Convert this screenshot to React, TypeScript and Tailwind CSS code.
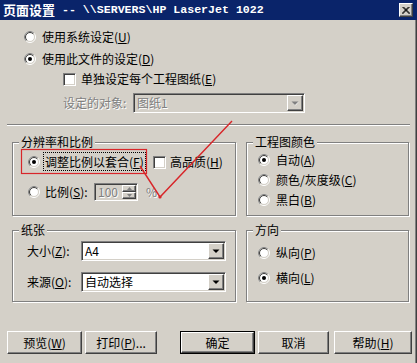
import React from 'react';

const sunken =
  'border border-t-[#808080] border-l-[#808080] border-b-white border-r-white shadow-[inset_1px_1px_0_#404040,inset_-1px_-1px_0_#d4d0c8]';
const raised =
  'border border-t-white border-l-white border-b-[#404040] border-r-[#404040] shadow-[inset_-1px_-1px_0_#808080,inset_1px_1px_0_#d4d0c8]';
const etched = 'border border-[#808080] shadow-[inset_1px_1px_0_#fff,1px_1px_0_#fff]';
const disabled = 'text-[#808080] [text-shadow:1px_1px_0_#fff]';

function Radio({ checked = false }: { checked?: boolean }) {
  return (
    <svg width="12" height="12" viewBox="0 0 12 12" className="shrink-0">
      <circle cx="6" cy="6" r="5.5" fill="none" stroke="#fff" />
      <path d="M2.1 9.9 A5.5 5.5 0 0 1 9.9 2.1" fill="none" stroke="#808080" />
      <circle cx="6" cy="6" r="4.5" fill="#fff" stroke="#d4d0c8" />
      <path d="M2.8 9.2 A4.5 4.5 0 0 1 9.2 2.8" fill="none" stroke="#404040" />
      {checked && <circle cx="6" cy="6" r="2" fill="#000" />}
    </svg>
  );
}

function Checkbox() {
  return <div className={`w-[13px] h-[13px] shrink-0 bg-white ${sunken}`} />;
}

function Arrow({ gray = false }: { gray?: boolean }) {
  return (
    <svg width="8" height="5" viewBox="0 0 8 5">
      {gray && <path d="M1.5 1 L7.5 1 L4.5 4.5 Z" fill="#fff" />}
      <path d="M0.5 0.5 L7.5 0.5 L4 4 Z" fill={gray ? '#808080' : '#000'} />
    </svg>
  );
}

function Combo({ value, width, off = false }: { value: string; width: string; off?: boolean }) {
  return (
    <div className={`flex h-[20px] items-center ${width} ${sunken} ${off ? 'bg-[#d4d0c8]' : 'bg-white'}`}>
      <span className={`flex-1 pl-[3px] ${off ? disabled : ''}`}>{value}</span>
      <div className={`mr-[1px] flex h-[16px] w-[16px] items-center justify-center bg-[#d4d0c8] ${raised}`}>
        <Arrow gray={off} />
      </div>
    </div>
  );
}

function Group({ title, className, children }: { title: string; className: string; children: React.ReactNode }) {
  return (
    <div className={`relative ${etched} ${className}`}>
      <span className="absolute -top-[9px] left-[6px] bg-[#d4d0c8] px-[2px] leading-[16px]">{title}</span>
      {children}
    </div>
  );
}

function Btn({ label, width, def = false }: { label: React.ReactNode; width: string; def?: boolean }) {
  return (
    <div className={`h-[23px] ${width} ${def ? 'border border-black' : ''}`}>
      <div className={`flex h-full w-full items-center justify-center ${raised}`}>{label}</div>
    </div>
  );
}

export default function App() {
  return (
    <div className="relative h-[363px] w-[417px] overflow-hidden whitespace-nowrap bg-[#d4d0c8] text-[12px] leading-[16px] text-black font-['Noto_Sans_CJK_SC',sans-serif] shadow-[inset_-1px_0_0_#404040,inset_-2px_0_0_#808080]">
      {/* title bar */}
      <div className="flex h-[20px] items-center bg-[#0a246a] pl-[3px] pr-[4px] text-white">
        <span className="text-[13px] font-bold">页面设置</span>
        <span className="whitespace-pre font-['Liberation_Mono',monospace] text-[11.6px] font-bold">
          {' -- \\\\SERVERS\\HP LaserJet 1022'}
        </span>
        <div className={`ml-auto flex h-[14px] w-[14px] items-center justify-center bg-[#d4d0c8] ${raised}`}>
          <svg width="8" height="7" viewBox="0 0 8 7">
            <path d="M0.5 0 L7.5 7 M1.5 0 L8 6.5 M7.5 0 L0.5 7 M6.5 0 L0 6.5" stroke="#000" strokeWidth="1" />
          </svg>
        </div>
      </div>

      {/* top options */}
      <div className="pt-[6px]">
        <div className="flex h-[22px] items-center pl-[24px]">
          <Radio />
          <span className="ml-[6px]">使用系统设定(<u>U</u>)</span>
        </div>
        <div className="flex h-[22px] items-center pl-[24px]">
          <Radio checked />
          <span className="ml-[6px]">使用此文件的设定(<u>D</u>)</span>
        </div>
        <div className="flex h-[18px] items-center pl-[63px]">
          <Checkbox />
          <span className="ml-[5px]">单独设定每个工程图纸(<u>E</u>)</span>
        </div>
        <div className="mt-[5px] flex h-[20px] items-center pl-[63px]">
          <span className={`w-[70px] ${disabled}`}>设定的对象:</span>
          <Combo value="图纸1" width="w-[172px]" off />
        </div>
      </div>

      <div className="ml-[7px] mt-[11px] h-[2px] w-[403px] border-t border-b border-t-[#808080] border-b-white" />

      {/* resolution / colour */}
      <div className="mt-[16px] flex gap-[10px] pl-[12px]">
        <Group title="分辨率和比例" className="h-[74px] w-[224px]">
          <div className="mt-[7px] flex h-[24px] items-center pl-[15px]">
            <Radio checked />
            <div className="ml-[4px] w-[101px]">
              <span className="outline outline-1 outline-dotted outline-black px-[1px]">
                调整比例以套合(<u>F</u>)
              </span>
            </div>
            <div className="ml-[8px] flex items-center">
              <Checkbox />
              <span className="ml-[4px]">高品质(<u>H</u>)</span>
            </div>
          </div>
          <div className="mt-[8px] flex h-[20px] items-center pl-[15px]">
            <Radio />
            <span className="ml-[5px] w-[49px]">比例(<u>S</u>):</span>
            <div className={`flex h-[18px] w-[44px] items-center bg-[#d4d0c8] ${sunken}`}>
              <span className={`flex-1 pl-[3px] ${disabled}`}>100</span>
              <div className="mr-[1px] flex h-[14px] w-[14px] flex-col">
                <div className={`flex flex-1 items-center justify-center ${raised}`}>
                  <svg width="5" height="3" viewBox="0 0 5 3"><path d="M0 3 L5 3 L2.5 0 Z" fill="#808080" /></svg>
                </div>
                <div className={`flex flex-1 items-center justify-center ${raised}`}>
                  <svg width="5" height="3" viewBox="0 0 5 3"><path d="M0 0 L5 0 L2.5 3 Z" fill="#808080" /></svg>
                </div>
              </div>
            </div>
            <span className={`ml-[8px] ${disabled}`}>%</span>
          </div>
        </Group>

        <Group title="工程图颜色" className="h-[74px] w-[163px]">
          <div className="pt-[7px] pl-[11px]">
            <div className="flex h-[20px] items-center">
              <Radio checked />
              <span className="ml-[6px]">自动(<u>A</u>)</span>
            </div>
            <div className="flex h-[20px] items-center">
              <Radio />
              <span className="ml-[6px]">颜色/灰度级(<u>C</u>)</span>
            </div>
            <div className="flex h-[20px] items-center">
              <Radio />
              <span className="ml-[6px]">黑白(<u>B</u>)</span>
            </div>
          </div>
        </Group>
      </div>

      {/* paper / orientation */}
      <div className="mt-[14px] flex gap-[10px] pl-[12px]">
        <Group title="纸张" className="h-[72px] w-[224px]">
          <div className="pt-[10px] pl-[14px]">
            <div className="flex h-[20px] items-center">
              <span className="w-[54px]">大小(<u>Z</u>):</span>
              <Combo value="A4" width="w-[145px]" />
            </div>
            <div className="mt-[11px] flex h-[20px] items-center">
              <span className="w-[54px]">来源(<u>O</u>):</span>
              <Combo value="自动选择" width="w-[145px]" />
            </div>
          </div>
        </Group>

        <Group title="方向" className="h-[72px] w-[163px]">
          <div className="pt-[12px] pl-[11px]">
            <div className="flex h-[20px] items-center">
              <Radio />
              <span className="ml-[6px]">纵向(<u>P</u>)</span>
            </div>
            <div className="mt-[5px] flex h-[20px] items-center">
              <Radio checked />
              <span className="ml-[6px]">横向(<u>L</u>)</span>
            </div>
          </div>
        </Group>
      </div>

      {/* buttons */}
      <div className="mt-[29px] flex pl-[7px]">
        <Btn label={<span>预览(<u>W</u>)</span>} width="w-[75px]" />
        <div className="ml-[3px]">
          <Btn label={<span>打印(<u>P</u>)...</span>} width="w-[72px]" />
        </div>
        <div className="ml-[23px]">
          <Btn label="确定" width="w-[75px]" def />
        </div>
        <div className="ml-[3px]">
          <Btn label="取消" width="w-[71px]" />
        </div>
        <div className="ml-[5px]">
          <Btn label={<span>帮助(<u>H</u>)</span>} width="w-[78px]" />
        </div>
      </div>

      {/* red annotation drawn on the screenshot */}
      <svg className="pointer-events-none absolute left-0 top-0" width="417" height="363">
        <rect x="21.5" y="149.5" width="125" height="24" fill="none" stroke="#d8262a" strokeWidth="1.2" />
        <polyline points="140,166 160,197 232,121" fill="none" stroke="#d8262a" strokeWidth="1.4" />
        <circle cx="160" cy="197" r="1.6" fill="#d8262a" />
      </svg>
    </div>
  );
}
